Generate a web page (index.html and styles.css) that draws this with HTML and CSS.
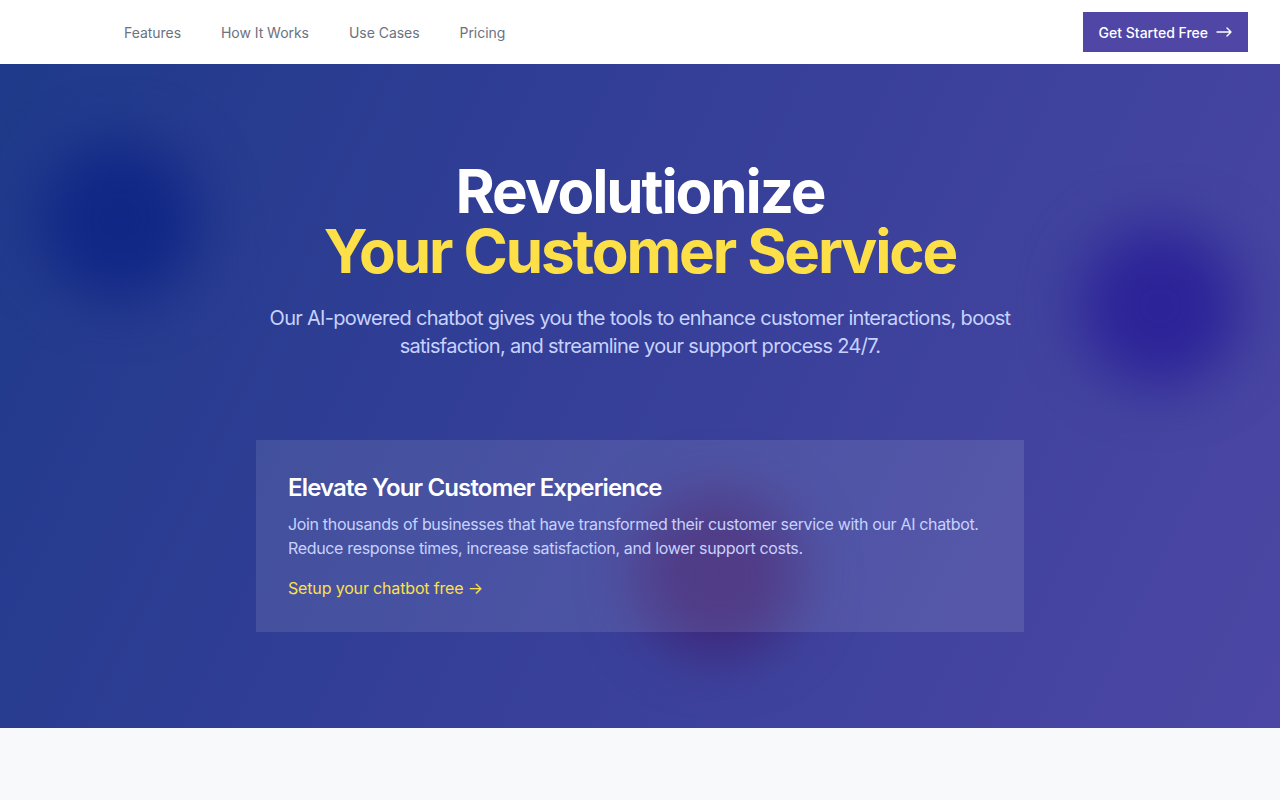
FILE: index.html
```html
<!DOCTYPE html>
<html lang="en">
<head>
  <meta charset="UTF-8" />
  <title>AI Chatbot</title>
  <link rel="stylesheet" href="styles.css">
</head>
<body>

<header class="topbar">
  <nav class="nav">
    <a href="#features">Features</a>
    <a href="#how">How It Works</a>
    <a href="#cases">Use Cases</a>
    <a href="#pricing">Pricing</a>
  </nav>
  <a class="cta" href="#start">
    Get Started Free
    <svg width="16" height="10" viewBox="0 0 16 10" fill="none" stroke="currentColor" stroke-width="1.4" stroke-linecap="round" stroke-linejoin="round">
      <path d="M1 5h14M11 1l4 4-4 4"/>
    </svg>
  </a>
</header>

<section class="hero">
  <div class="blob blob-left"></div>
  <div class="blob blob-right"></div>
  <div class="blob blob-mid"></div>

  <div class="hero-inner">
    <h1 class="hero-title">
      Revolutionize<br>
      <span class="accent">Your Customer Service</span>
    </h1>
    <p class="hero-sub">
      Our AI-powered chatbot gives you the tools to enhance customer interactions, boost
      satisfaction, and streamline your support process 24/7.
    </p>

    <div class="panel">
      <h3>Elevate Your Customer Experience</h3>
      <p>Join thousands of businesses that have transformed their customer service with our AI chatbot.
        Reduce response times, increase satisfaction, and lower support costs.</p>
      <a class="panel-link" href="#start">Setup your chatbot free &rarr;</a>
    </div>
  </div>
</section>

<section class="below"></section>

</body>
</html>
```

FILE: styles.css
```css
body {
  margin: 0;
  font-family: Inter, "Noto Sans", sans-serif;
  background-color: #f8f9fb;
}

a {
  text-decoration: none;
}

.topbar {
  height: 64px;
  background-color: #fff;
  display: flex;
  align-items: center;
  justify-content: space-between;
  padding: 0 32px 0 124px;
}

.nav {
  display: flex;
  gap: 40px;
  padding-top: 1px;
}

.nav a {
  font-size: 14px;
  letter-spacing: -0.003em;
  color: #6b7280;
}

.cta {
  display: flex;
  align-items: center;
  gap: 8px;
  height: 40px;
  padding: 0 16px;
  background-color: #4f46a6;
  color: #fff;
  font-size: 14px;
  font-weight: 500;
}

.hero {
  position: relative;
  overflow: hidden;
  height: 664px;
  background: linear-gradient(115deg, #1f3a8a 0%, #353f98 45%, #4c47a4 100%);
}

.blob {
  position: absolute;
  border-radius: 50%;
  filter: blur(28px);
}

.blob-left {
  left: 40px;
  top: 76px;
  width: 160px;
  height: 160px;
  background-color: #112786;
}

.blob-right {
  left: 1080px;
  top: 162px;
  width: 160px;
  height: 160px;
  background-color: #2c2398;
}

.blob-mid {
  left: 636px;
  top: 428px;
  width: 164px;
  height: 164px;
  background-color: rgba(62, 36, 118, 0.9);
}

.hero-inner {
  position: relative;
  width: 768px;
  margin: 0 auto;
  padding-top: 97px;
  text-align: center;
}

.hero-title {
  margin: 0;
  font-size: 60px;
  line-height: 60px;
  font-weight: 700;
  letter-spacing: -0.035em;
  color: #fff;
}

.accent {
  color: #fde047;
}

.hero-sub {
  margin: 23px 0 0;
  font-size: 20px;
  line-height: 28px;
  letter-spacing: -0.035em;
  color: #c7d2fe;
}

.panel {
  margin-top: 80px;
  padding: 32px;
  background-color: rgba(255, 255, 255, 0.1);
  text-align: left;
}

.panel h3 {
  margin: 0;
  font-size: 24px;
  line-height: 32px;
  font-weight: 600;
  letter-spacing: -0.035em;
  color: #fff;
}

.panel p {
  margin: 8px 0 0;
  font-size: 16px;
  line-height: 24px;
  letter-spacing: -0.021em;
  color: #c7d2fe;
}

.panel-link {
  display: inline-block;
  margin-top: 16px;
  font-size: 16px;
  line-height: 24px;
  letter-spacing: -0.01em;
  color: #fde047;
}

.below {
  height: 200px;
}
```
